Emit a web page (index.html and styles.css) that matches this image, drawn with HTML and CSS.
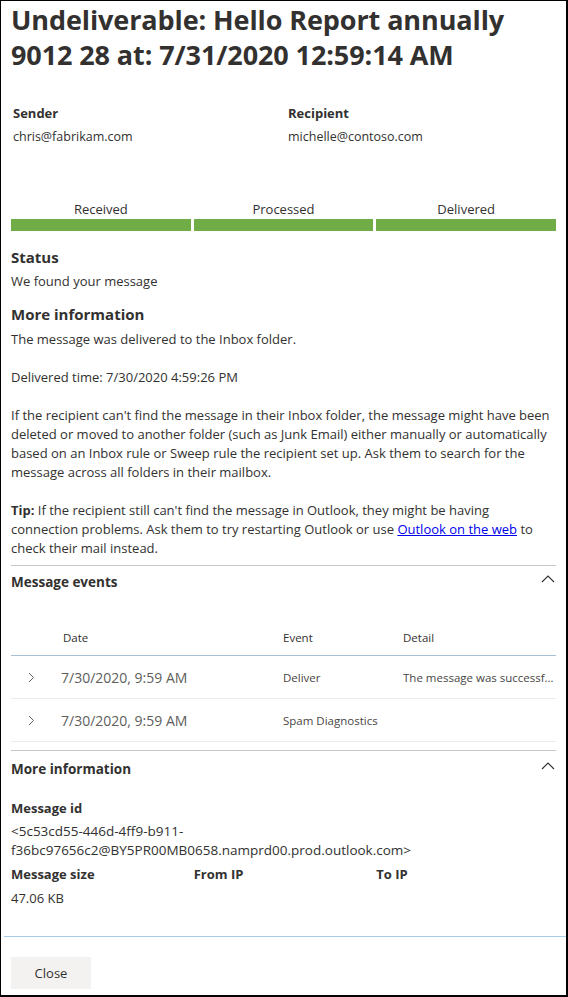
FILE: index.html
```html
<!DOCTYPE html>
<html lang="en">
<head>
<meta charset="utf-8">
<title>Undeliverable message</title>
<link rel="stylesheet" href="styles.css">
</head>
<body>
<div class="window">
  <div class="page">
    <h1 class="title">Undeliverable: Hello Report annually 9012 28 at: 7/31/2020 12:59:14 AM</h1>

    <div class="parties">
      <div class="party">
        <div class="label">Sender</div>
        <div class="value">chris@fabrikam.com</div>
      </div>
      <div class="party">
        <div class="label">Recipient</div>
        <div class="value">michelle@contoso.com</div>
      </div>
    </div>

    <div class="progress">
      <div class="step"><div class="step-label">Received</div><div class="bar"></div></div>
      <div class="step"><div class="step-label">Processed</div><div class="bar"></div></div>
      <div class="step"><div class="step-label">Delivered</div><div class="bar"></div></div>
    </div>

    <h2 class="status-h">Status</h2>
    <p class="status-text">We found your message</p>

    <h2 class="info-h">More information</h2>
    <div class="info">
      <p>The message was delivered to the Inbox folder.</p>
      <p>Delivered time: 7/30/2020 4:59:26 PM</p>
      <p>If the recipient can't find the message in their Inbox folder, the message might have been deleted or moved to another folder (such as Junk Email) either manually or automatically based on an Inbox rule or Sweep rule the recipient set up. Ask them to search for the message across all folders in their mailbox.</p>
      <p><b>Tip:</b> If the recipient still can't find the message in Outlook, they might be having connection problems. Ask them to try restarting Outlook or use <a href="#" class="link">Outlook on the web</a> to check their mail instead.</p>
    </div>

    <section class="panel events-panel">
      <div class="panel-head">
        <span class="panel-title">Message events</span>
        <svg class="chev-up" width="14" height="9" viewBox="0 0 14 9"><polyline points="1,8 7,2 13,8" fill="none" stroke="#323130" stroke-width="1.1"/></svg>
      </div>
      <div class="events">
        <div class="ev-row ev-header">
          <span></span><span>Date</span><span>Event</span><span>Detail</span>
        </div>
        <div class="ev-row">
          <span class="ev-chev"><svg width="7" height="11" viewBox="0 0 7 11"><polyline points="1,1 5.5,5.5 1,10" fill="none" stroke="#605e5c" stroke-width="1"/></svg></span>
          <span class="ev-date">7/30/2020, 9:59 AM</span>
          <span class="ev-event">Deliver</span>
          <span class="ev-detail">The message was successfully delivered.</span>
        </div>
        <div class="ev-row">
          <span class="ev-chev"><svg width="7" height="11" viewBox="0 0 7 11"><polyline points="1,1 5.5,5.5 1,10" fill="none" stroke="#605e5c" stroke-width="1"/></svg></span>
          <span class="ev-date">7/30/2020, 9:59 AM</span>
          <span class="ev-event">Spam Diagnostics</span>
          <span class="ev-detail"></span>
        </div>
      </div>
    </section>

    <section class="panel more-panel">
      <div class="panel-head">
        <span class="panel-title">More information</span>
        <svg class="chev-up" width="14" height="9" viewBox="0 0 14 9"><polyline points="1,8 7,2 13,8" fill="none" stroke="#323130" stroke-width="1.1"/></svg>
      </div>
      <div class="label mid-label">Message id</div>
      <div class="msgid">&lt;5c53cd55-446d-4ff9-b911-<br>f36bc97656c2@BY5PR00MB0658.namprd00.prod.outlook.com&gt;</div>
      <div class="meta">
        <div><div class="label">Message size</div><div class="value size">47.06 KB</div></div>
        <div><div class="label">From IP</div></div>
        <div><div class="label">To IP</div></div>
      </div>
    </section>
  </div>

  <footer class="footer">
    <button class="close-btn">Close</button>
  </footer>
</div>
</body>
</html>
```

FILE: styles.css
```css
* { box-sizing: border-box; }
html, body { margin: 0; padding: 0; background: #fff; }
body {
  font-family: "Open Sans", "Noto Sans", sans-serif;
  color: #323130;
  font-size: 13px;
}
.window {
  width: 568px;
  height: 997px;
  border-top: 1px solid #000;
  border-left: 1px solid #000;
  border-right: 2px solid #000;
  border-bottom: 2px solid #000;
  overflow: hidden;
  display: flex;
  flex-direction: column;
}
.page {
  padding: 0 10px;
  flex: 1;
}
.title {
  margin: 1px 0 0 0;
  max-width: 500px;
  font-size: 27px;
  line-height: 35px;
  font-weight: 700;
  letter-spacing: -0.1px;
}
.parties {
  margin-top: 31px;
  display: grid;
  grid-template-columns: 275px 1fr;
  padding-left: 2px;
}
.label {
  font-weight: 700;
  font-size: 13px;
  line-height: 20px;
}
.value {
  margin-top: 4px;
  font-size: 12.5px;
  line-height: 20px;
}
.value.size { font-size: 13px; }
.progress {
  margin-top: 52px;
  display: flex;
  gap: 3px;
}
.step { flex: 1; }
.step-label {
  text-align: center;
  font-size: 13px;
  line-height: 20px;
}
.bar {
  height: 12px;
  background: #70ad47;
}
.status-h {
  margin: 15px 0 0;
  font-size: 15px;
  line-height: 22px;
  font-weight: 700;
}
.status-text {
  margin: 3px 0 0;
  font-size: 13px;
  line-height: 20px;
}
.info-h {
  margin: 11px 0 0;
  font-size: 15px;
  line-height: 24px;
  font-weight: 700;
}
.info { margin-top: 4px; }
.info p {
  margin: 0 0 19px;
  font-size: 13px;
  line-height: 19px;
}
.info p:last-child { margin-bottom: 0; }
.link { color: #0000ee; text-decoration: underline; }

.panel { border-top: 1px solid #c8c6c4; }
.events-panel { margin-top: 7px; }
.panel-head {
  display: flex;
  justify-content: space-between;
  align-items: center;
  margin-top: 6px;
  height: 20px;
}
.panel-title {
  font-weight: 700;
  font-size: 13.5px;
  line-height: 20px;
}
.chev-up { margin-right: 1px; margin-top: -7px; }

.events { margin-top: 38px; }
.ev-row {
  display: grid;
  grid-template-columns: 52px 220px 120px 1fr;
  align-items: center;
  height: 43px;
  border-bottom: 1px solid #edebe9;
  font-size: 11.5px;
}
.ev-header {
  height: 26px;
  align-items: start;
  line-height: 16px;
  border-bottom: 1px solid #a8c0d4;
}
.ev-chev { padding-left: 17px; display: flex; }
.ev-date { font-size: 14px; color: #605e5c; margin-left: -2px; }
.ev-event { color: #484644; }
.ev-detail {
  color: #484644;
  white-space: nowrap;
  overflow: hidden;
  text-overflow: ellipsis;
  width: 153px;
}

.more-panel { margin-top: 8px; }
.more-panel .panel-head { margin-top: 8px; }
.mid-label { margin-top: 19px; }
.msgid {
  margin-top: 4px;
  font-size: 13.5px;
  line-height: 19px;
}
.meta {
  margin-top: 4px;
  display: grid;
  grid-template-columns: 1fr 1fr 1fr;
  column-gap: 3px;
}

.footer {
  margin-left: 3px;
  border-top: 1px solid #a6cde8;
  padding: 20px 0 6px 7px;
}
.close-btn {
  width: 80px;
  height: 32px;
  background: #f3f2f1;
  border: none;
  font-family: "Open Sans", "Noto Sans", sans-serif;
  font-size: 13px;
  color: #323130;
  padding: 0;
}
```
